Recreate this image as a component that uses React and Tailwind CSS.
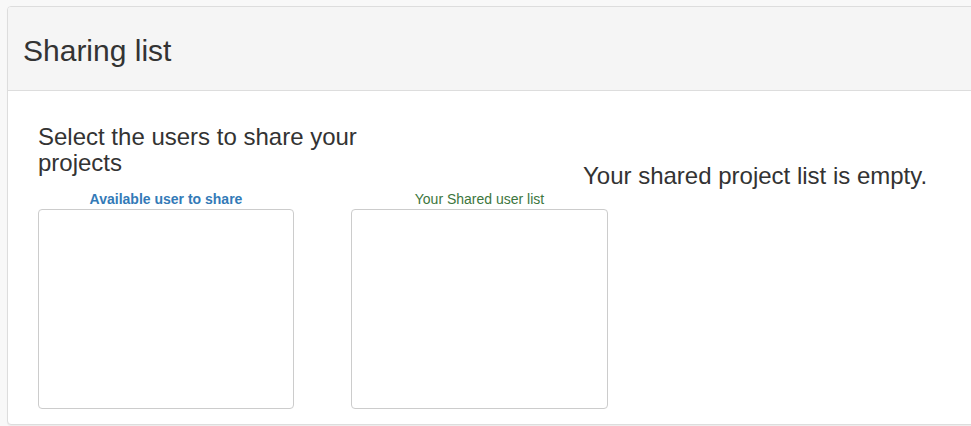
import React from "react";

// Caixa de lista vazia (select multiple)
function UserListBox({ title, titleClass, widthClass }) {
  return (
    <div className={`flex flex-col ${widthClass}`}>
      <div className={`text-center text-[14px] leading-[20px] ${titleClass}`}>{title}</div>
      <div className="h-[200px] bg-white border border-[#ccc] rounded-[4px]" />
    </div>
  );
}

export default function App() {
  return (
    <div
      className="w-[971px] h-[426px] overflow-hidden bg-[#f8f8f8] pt-[6px] pl-[7px] text-[#333]"
      style={{ fontFamily: '"Liberation Sans", Arial, sans-serif' }}
    >
      <div className="w-[1100px] bg-white border border-[#ddd] rounded-[4px] shadow-[0_1px_1px_rgba(0,0,0,0.05)]">
        <div className="bg-[#f5f5f5] border-b border-[#ddd] rounded-t-[3px] px-[15px] pt-[27px] pb-[23px]">
          <h2 className="text-[30px] leading-[33px]">Sharing list</h2>
        </div>

        <div className="flex px-[15px] pt-[15px] pb-[15px]">
          <div className="w-[545px] shrink-0 px-[15px]">
            <h3 className="w-[370px] mt-[18px] text-[24px] leading-[26.4px]">
              Select the users to share your projects
            </h3>
            <div className="flex gap-[57px] mt-[12px] w-[571px]">
              <UserListBox
                title="Available user to share"
                titleClass="font-bold text-[#337ab7]"
                widthClass="w-[256px]"
              />
              <UserListBox
                title="Your Shared user list"
                titleClass="text-[#3c763d]"
                widthClass="w-[257px]"
              />
            </div>
          </div>
          <div className="px-[15px]">
            <h3 className="mt-[57px] text-[24px] leading-[26.4px]">Your shared project list is empty.</h3>
          </div>
        </div>
      </div>
    </div>
  );
}
